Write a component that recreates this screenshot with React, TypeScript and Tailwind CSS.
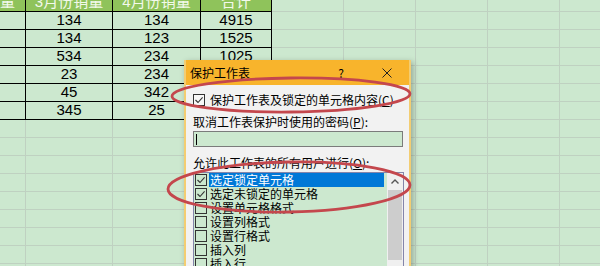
const COL_W = ["w-[26px]", "w-[87px]", "w-[88px]", "w-[71px]", "w-[72px]", "w-[72px]", "w-[72px]", "w-[72px]", "w-[72px]"];

const HEADER = ["销量", "3月份销量", "4月份销量", "合计"];

const DATA = [
  ["", "134", "134", "4915"],
  ["", "134", "123", "1525"],
  ["", "534", "234", "1025"],
  ["", "23", "234", ""],
  ["", "45", "342", ""],
  ["", "345", "25", ""],
];

const EMPTY_ROWS = 9;

const PERMISSIONS = [
  { label: "选定锁定单元格", checked: true, selected: true },
  { label: "选定未锁定的单元格", checked: true },
  { label: "设置单元格格式" },
  { label: "设置列格式" },
  { label: "设置行格式" },
  { label: "插入列" },
  { label: "插入行" },
];

function Cell({
  width,
  dark,
  head,
  alignEnd,
  children,
}: {
  width: string;
  dark?: boolean;
  head?: boolean;
  alignEnd?: boolean;
  children?: React.ReactNode;
}) {
  return (
    <div
      className={`${width} shrink-0 h-full flex items-center overflow-hidden whitespace-nowrap border-r border-b ${
        alignEnd ? "justify-end pr-[10px]" : "justify-center"
      } ${dark ? "border-black" : "border-[#bfd1c1]"} ${
        head ? "bg-[#8fc35b] text-[#f3f9ec]" : "text-black"
      }`}
    >
      {children}
    </div>
  );
}

function Sheet() {
  return (
    <div className="flex flex-col text-[15px] font-['Liberation_Sans','Noto_Sans_CJK_SC',sans-serif]">
      <div className="flex h-[19px] -mt-[7px]">
        {COL_W.map((w, i) => (
          <Cell key={i} width={w} dark={i < 4} head={i < 4} alignEnd={i === 0}>
            {HEADER[i]}
          </Cell>
        ))}
      </div>
      {DATA.map((row, r) => (
        <div key={r} className="flex h-[18px]">
          {COL_W.map((w, i) => (
            <Cell key={i} width={w} dark={i < 4}>
              {row[i]}
            </Cell>
          ))}
        </div>
      ))}
      {Array.from({ length: EMPTY_ROWS }).map((_, r) => (
        <div key={r} className="flex h-[18px]">
          {COL_W.map((w, i) => (
            <Cell key={i} width={w} />
          ))}
        </div>
      ))}
    </div>
  );
}

function CheckBox({ checked, light }: { checked?: boolean; light?: boolean }) {
  return (
    <span
      className={`w-[12px] h-[12px] shrink-0 border border-[#333333] flex items-center justify-center ${
        light ? "bg-[#f7f7f7]" : "bg-[#cce8cf]"
      }`}
    >
      {checked && (
        <svg width="10" height="10" viewBox="0 0 10 10">
          <path d="M1.5 5 L4 7.5 L8.6 2.4" fill="none" stroke="#333333" strokeWidth="1.1" />
        </svg>
      )}
    </span>
  );
}

function ProtectDialog() {
  return (
    <div className="absolute left-[184px] top-[60px] w-[227px] h-[212px] flex flex-col border-x-2 border-[#f3cd72] bg-[#f2f2f2] shadow-[2px_2px_6px_rgba(0,0,0,0.28)] text-[12px] text-black font-['Noto_Sans_CJK_SC','Liberation_Sans',sans-serif]">
      <div className="h-[25px] shrink-0 flex items-center bg-[#f8b42c] pl-[4px]">
        <span>保护工作表</span>
        <span className="ml-auto">?</span>
        <svg width="10" height="10" viewBox="0 0 10 10" className="ml-[38px] mr-[17px]">
          <path d="M0.5 0.5 L9.5 9.5 M9.5 0.5 L0.5 9.5" stroke="#222222" strokeWidth="1" />
        </svg>
      </div>

      <div className="flex flex-col flex-1 pl-[7px] min-h-0">
        <div className="mt-[7px] h-[16px] flex items-center gap-[5px]">
          <CheckBox checked light />
          <span>
            保护工作表及锁定的单元格内容(<span className="underline">C</span>)
          </span>
        </div>

        <div className="mt-[6px] h-[16px] flex items-center">
          取消工作表保护时使用的密码(<span className="underline">P</span>):
        </div>

        <div className="mt-[1px] h-[16px] w-[210px] border border-[#7b7b7b] bg-[#cce8cf] flex items-center">
          <span className="ml-[2px] w-[1px] h-[11px] bg-black" />
        </div>

        <div className="mt-[8px] h-[16px] flex items-center">
          允许此工作表的所有用户进行(<span className="underline">O</span>):
        </div>

        <div className="mt-[1px] w-[211px] flex-1 border border-[#8485aa] bg-[#cce8cf] flex overflow-hidden">
          <div className="flex-1 flex flex-col">
            {PERMISSIONS.map((p) => (
              <div key={p.label} className="h-[14px] shrink-0 flex items-center leading-[14px]">
                <span className="ml-[1px]">
                  <CheckBox checked={p.checked} />
                </span>
                <span
                  className={`ml-[2px] mr-[3px] flex-1 h-full leading-[14px] pl-[1px] whitespace-nowrap ${
                    p.selected ? "bg-[#0078d7] text-white" : ""
                  }`}
                >
                  {p.label}
                </span>
              </div>
            ))}
          </div>
          <div className="w-[16px] shrink-0 flex flex-col bg-[#f0f0f0]">
            <div className="h-[16px] shrink-0 flex items-center justify-center">
              <svg width="8" height="5" viewBox="0 0 8 5">
                <path d="M0.5 4.5 L4 1 L7.5 4.5" fill="none" stroke="#555555" strokeWidth="1.4" />
              </svg>
            </div>
            <div className="mx-[1px] mt-[1px] h-[70px] bg-[#cdcdcd]" />
          </div>
        </div>
      </div>
    </div>
  );
}

function Annotations() {
  return (
    <svg
      width="600"
      height="266"
      viewBox="0 0 600 266"
      className="absolute left-0 top-0 pointer-events-none"
    >
      <ellipse cx="291" cy="95" rx="119" ry="17" fill="none" stroke="#c4474d" strokeWidth="2.8" transform="rotate(-0.6 291 95)" />
      <ellipse cx="289" cy="187" rx="121" ry="25" fill="none" stroke="#c4474d" strokeWidth="2.8" transform="rotate(-1 289 187)" />
    </svg>
  );
}

export default function App() {
  return (
    <div className="relative w-[600px] h-[266px] overflow-hidden bg-[#cce8cf]">
      <Sheet />
      <ProtectDialog />
      <Annotations />
    </div>
  );
}
